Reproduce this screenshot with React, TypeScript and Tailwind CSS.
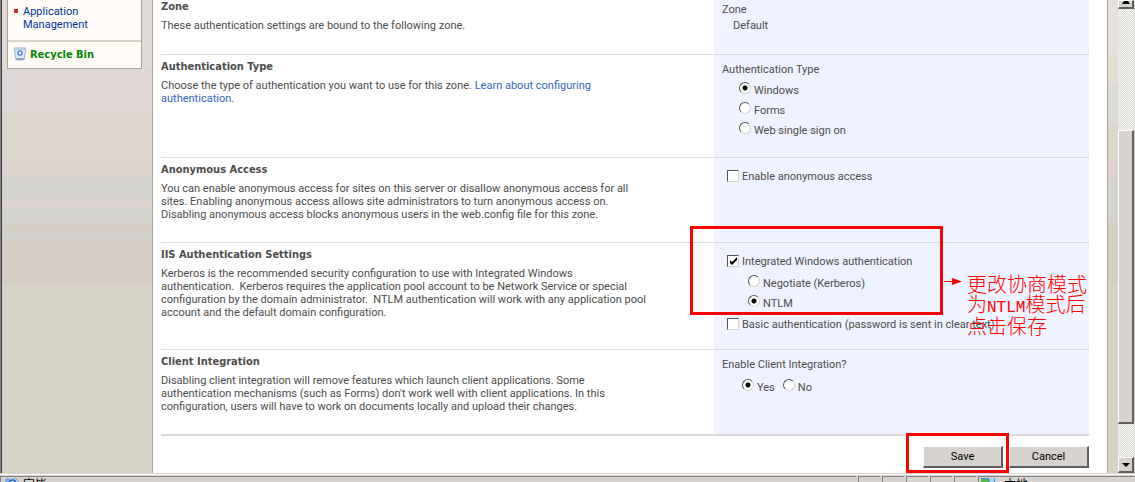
import React from "react";

const bevel =
  "bg-[#d6d3ce] border-t border-l border-white border-r-2 border-b-2 border-r-[#5f5f5f] border-b-[#5f5f5f]";

const radioClass =
  "appearance-none m-0 h-3 w-3 shrink-0 rounded-full bg-white border border-t-[#555] border-l-[#555] border-r-[#d6d3ce] border-b-[#d6d3ce] checked:bg-[radial-gradient(circle,#000_2px,#fff_3px)]";

const stripes =
  "bg-[linear-gradient(#dfdcd7_0_70px,#dfd6d6_70px_112px,#ddd6cc_112px_159px,#dfd3d0_159px_177px,#d5d3cd_177px_199px,#dfd3d0_199px_207px,#d5d3cd_207px_223px,#d6cdc3_223px_231px,#d3d1cb_231px_239px,#d6cdc4_239px_285px,#d6d2c6_285px)]";

const edgeStripes =
  "bg-[linear-gradient(#e5e2dd_0_44px,#e8dede_44px_56px,#e6ddd3_56px_83px,#dddbd6_83px_125px,#ddd6cc_125px_159px,#dfd3d0_159px_177px,#d5d3cd_177px_223px,#d6cdc4_223px_285px,#d6d2c6_285px)]";

type RadioProps = { name: string; label: string; checked?: boolean };

const Radio = ({ name, label, checked }: RadioProps) => (
  <label className="flex h-5 items-center gap-[3px]">
    <input type="radio" name={name} defaultChecked={checked} className={radioClass} />
    <span className="pt-1">{label}</span>
  </label>
);

const Check = ({ label, checked }: { label: string; checked?: boolean }) => (
  <label className="flex h-5 items-center gap-[3px] whitespace-nowrap">
    <span className="grid shrink-0">
      <input
        type="checkbox"
        defaultChecked={checked}
        className="peer appearance-none m-0 h-3 w-3 bg-white border border-t-[#555] border-l-[#555] border-r-[#d6d3ce] border-b-[#d6d3ce] [grid-area:1/1]"
      />
      <svg
        viewBox="0 0 12 12"
        className="pointer-events-none hidden h-3 w-3 [grid-area:1/1] peer-checked:block"
      >
        <path d="M3 5v3l2 2 5-5V2L5 7z" fill="#000" />
      </svg>
    </span>
    {label}
  </label>
);

type SectionProps = {
  title: string;
  text: React.ReactNode;
  className: string;
  children: React.ReactNode;
};

const Section = ({ title, text, className, children }: SectionProps) => (
  <section className={`grid grid-cols-[1fr_375px] ${className}`}>
    <div className="pt-[5px]">
      <h2 className="font-['DejaVu_Sans_Condensed','DejaVu_Sans',sans-serif] font-bold">{title}</h2>
      <p className="mt-[6px] max-w-[520px] whitespace-pre-line">{text}</p>
    </div>
    <div className="relative bg-[#eff3ff] pt-2 pl-2">{children}</div>
  </section>
);

const Sidebar = () => (
  <aside className={`w-[150px] shrink-0 pl-[5px] ${stripes}`}>
    <nav className="w-[135px] border border-t-0 border-[#aea49b] bg-[#fffcf7]">
      <div className="flex gap-[5px] pt-[5px] pb-[9px] pl-[6px] text-[#003399]">
        <span className="mt-1 h-1 w-1 bg-[#c8301c]"></span>
        <a href="#">
          Application
          <br />
          Management
        </a>
      </div>
      <a
        href="#"
        className="flex h-7 items-center gap-[3px] border-t-2 border-[#d9d5c8] pb-[2px] pl-[5px] font-['DejaVu_Sans_Condensed','DejaVu_Sans',sans-serif] font-bold text-[#008800]"
      >
        <svg viewBox="0 0 14 14" className="h-[14px] w-[14px]">
          <path d="M1 1h12l-2 12H3z" fill="#dce8f4" stroke="#9fb4c8" />
          <path d="M1 1h12v2H1z" fill="#b9cbdc" />
          <circle cx="7" cy="6" r="2" fill="#fff" stroke="#4f86e0" strokeWidth="1.5" />
          <path d="M3 11h8l-1 2H4z" fill="#8ca2b8" />
        </svg>
        Recycle Bin
      </a>
    </nav>
  </aside>
);

const Scrollbar = () => (
  <div className="flex w-[17px] shrink-0 flex-col border-r border-[#d6d3ce] bg-[repeating-conic-gradient(#d6d3ce_0_25%,#fff_0_50%)] bg-[length:2px_2px]">
    <button aria-label="Scroll up" className={`flex h-[9px] items-start justify-center ${bevel}`}>
      <svg viewBox="0 0 8 4" className="h-1 w-2">
        <path d="M2 0h4l2 3H0z" fill="#000" />
      </svg>
    </button>
    <div className="h-[121px]"></div>
    <div className={`flex-1 ${bevel}`}></div>
    <div className="h-[33px]"></div>
    <button aria-label="Scroll down" className={`flex h-4 items-center justify-center ${bevel}`}>
      <svg viewBox="0 0 8 4" className="h-1 w-2">
        <path d="M0 0h8L4 4z" fill="#000" />
      </svg>
    </button>
  </div>
);

const StatusBar = () => (
  <footer className="flex h-[9px] shrink-0 items-start gap-[2px] overflow-hidden border-t border-[#d6d3ce] bg-[#d6d3ce] pt-[2px] text-[12px] leading-[14px] text-black shadow-[inset_0_1px_#fff]">
    <div className="flex h-5 flex-1 gap-1 border-t border-l border-[#848284] pt-[1px] pl-1">
      <svg viewBox="0 0 14 14" className="h-[14px] w-[14px]">
        <path d="M2 0h8l3 3v11H2z" fill="#fff" stroke="#5f8fd0" />
        <path d="M0 1h6v4H0z" fill="#7fb0e8" />
        <path d="M4 5c2-4 6-4 7 0" stroke="#2f6fd0" strokeWidth="2" fill="none" />
      </svg>
      <span>完毕</span>
    </div>
    {[1, 2, 3, 4, 5].map((n) => (
      <div key={n} className="h-5 w-[22px] border-t border-l border-[#848284]"></div>
    ))}
    <div className="flex h-5 w-[157px] gap-2 border-t border-l border-[#848284] pt-[1px] pl-[1px]">
      <svg viewBox="0 0 16 14" className="h-[14px] w-4">
        <path d="M1 0h14v14H1z" fill="#3f8fe0" />
        <path d="M1 1h6l2 2-3 3-5 1z" fill="#58b848" />
        <path d="M9 0h5v4l-4 1z" fill="#9fd8f0" />
      </svg>
      <span>本地</span>
    </div>
  </footer>
);

const App = () => {
  return (
    <div className="flex h-screen flex-col overflow-hidden bg-white font-[Roboto,'Noto_Sans_CJK_SC',sans-serif] text-[11px] leading-[13px] text-[#4c4c4c]">
      <div className="flex min-h-0 flex-1">
        <div className="w-[2px] shrink-0 border-r border-[#3c3c40] bg-[#848490]"></div>
        <Sidebar />
        <main className="min-w-0 flex-1 border-r border-l border-[#aea49b] bg-white pr-[18px] pl-2">
          <Section
            title="Zone"
            text="These authentication settings are bound to the following zone."
            className="-mt-[5px] min-h-[59px]"
          >
            <p>Zone</p>
            <p className="mt-[3px] pl-[11px]">Default</p>
          </Section>
          <Section
            title="Authentication Type"
            text={
              <>
                Choose the type of authentication you want to use for this zone.{" "}
                <a href="#" className="text-[#3366bb]">
                  Learn about configuring{"\n"}authentication.
                </a>
              </>
            }
            className="min-h-[103px] border-t border-[#dadadd]"
          >
            <p>Authentication Type</p>
            <div className="mt-[2px] pl-[17px]">
              <Radio name="auth" label="Windows" checked />
              <Radio name="auth" label="Forms" />
              <Radio name="auth" label="Web single sign on" />
            </div>
          </Section>
          <Section
            title="Anonymous Access"
            text={
              "You can enable anonymous access for sites on this server or disallow anonymous access for all\nsites. Enabling anonymous access allows site administrators to turn anonymous access on.\nDisabling anonymous access blocks anonymous users in the web.config file for this zone."
            }
            className="min-h-[85px] border-t border-[#dadadd]"
          >
            <div className="pl-[5px]">
              <Check label="Enable anonymous access" />
            </div>
          </Section>
          <Section
            title="IIS Authentication Settings"
            text={
              "Kerberos is the recommended security configuration to use with Integrated Windows\nauthentication.\u00a0 Kerberos requires the application pool account to be Network Service or special\nconfiguration by the domain administrator.\u00a0 NTLM authentication will work with any application pool\naccount and the default domain configuration."
            }
            className="min-h-[107px] border-t border-[#dadadd]"
          >
            <div className="pl-[5px]">
              <Check label="Integrated Windows authentication" checked />
              <div className="mb-[3px] pl-[21px]">
                <Radio name="iis" label="Negotiate (Kerberos)" />
                <Radio name="iis" label="NTLM" checked />
              </div>
              <Check label="Basic authentication (password is sent in clear text)" />
            </div>
            {/* callout over the IIS options */}
            <div className="pointer-events-none absolute -top-[17px] -left-6 h-[89px] w-[253px] border-3 border-[#ff0000]"></div>
            <div className="pointer-events-none absolute top-[31px] left-[230px] flex items-start gap-[5px] text-[#ff0000]">
              <svg viewBox="0 0 18 9" className="mt-[3px] h-[9px] w-[18px]">
                <path d="M0 4h8V1l10 3.5L8 8V5H0z" fill="#f00" />
              </svg>
              <p className="font-['Noto_Sans_CJK_SC',sans-serif] text-[20px] leading-5 font-light whitespace-nowrap">
                更改协商模式
                <br />为
                <span className="font-['Liberation_Mono',monospace] text-[16px] leading-none">
                  NTLM
                </span>
                模式后
                <br />
                点击保存
              </p>
            </div>
          </Section>
          <Section
            title="Client Integration"
            text={
              "Disabling client integration will remove features which launch client applications. Some\nauthentication mechanisms (such as Forms) don't work well with client applications. In this\nconfiguration, users will have to work on documents locally and upload their changes."
            }
            className="min-h-[85px] border-t border-[#dadadd]"
          >
            <p>Enable Client Integration?</p>
            <div className="mt-1 flex gap-2 pl-5">
              <Radio name="client" label="Yes" checked />
              <Radio name="client" label="No" />
            </div>
          </Section>
          <div className="flex justify-end gap-[6px] border-t-2 border-[#dadadd] pt-[10px] text-black">
            <div className="relative">
              <button className={`h-[22px] w-20 ${bevel}`}>Save</button>
              <div className="pointer-events-none absolute -top-[13px] -left-[17px] h-10 w-[103px] border-3 border-[#ff0000]"></div>
            </div>
            <button className={`h-[22px] w-20 ${bevel}`}>Cancel</button>
          </div>
        </main>
        <div className={`w-[10px] shrink-0 ${edgeStripes}`}></div>
        <Scrollbar />
      </div>
      <StatusBar />
    </div>
  );
};

export default App;
